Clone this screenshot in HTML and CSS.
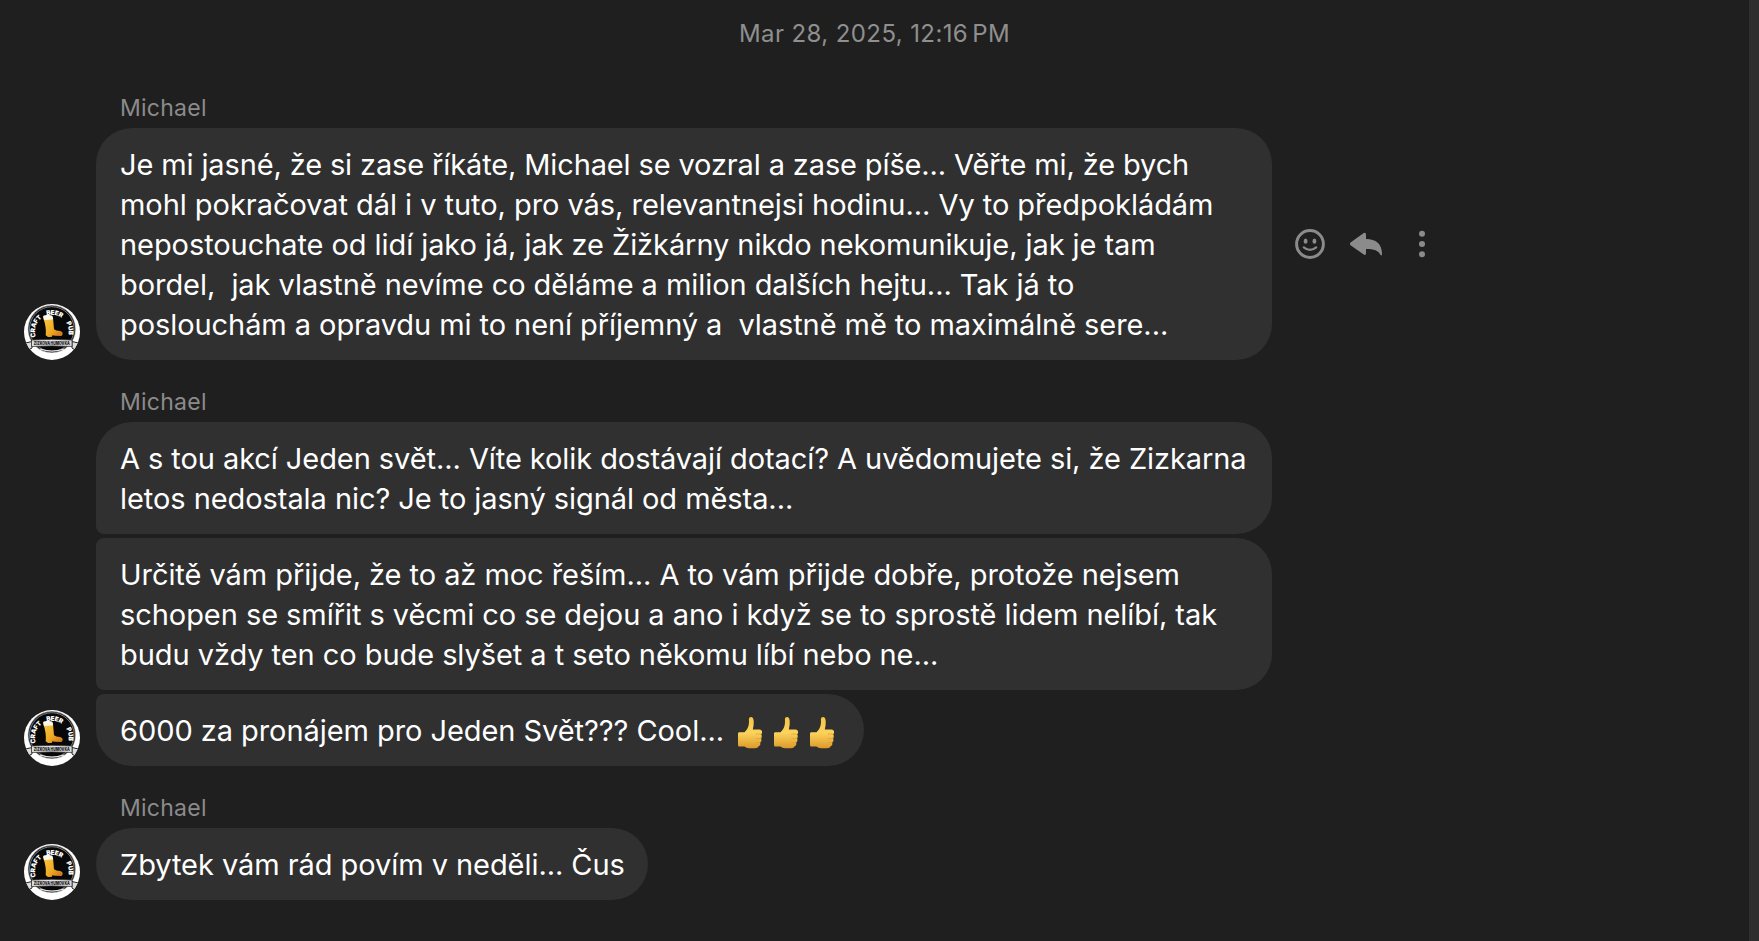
FILE: index.html
```html
<!DOCTYPE html>
<html lang="cs">
<head>
<meta charset="utf-8">
<title>Chat</title>
<link rel="stylesheet" href="styles.css">
</head>
<body>
<svg class="defs" aria-hidden="true">
  <defs>
    <linearGradient id="beer" x1="0" y1="0" x2="1" y2="1"><stop offset="0" stop-color="#f7c843"/><stop offset=".55" stop-color="#efaa24"/><stop offset="1" stop-color="#c96a1c"/></linearGradient>
    <linearGradient id="skin" x1="0" y1="0" x2="0" y2="1"><stop offset="0" stop-color="#f6c544"/><stop offset=".5" stop-color="#fbd35c"/><stop offset="1" stop-color="#dd9a2a"/></linearGradient>
    <clipPath id="round"><circle cx="28" cy="28" r="28"/></clipPath>
    <path id="arc" d="M12 33.2A16.8 16.8 0 1 1 43.6 33.2"/>
    <symbol id="avatar" viewBox="0 0 56 56">
      <g clip-path="url(#round)">
        <rect width="56" height="56" fill="#fff"/>
        <circle cx="27.8" cy="25" r="24" fill="#999"/>
        <circle cx="27.8" cy="25" r="23.3" fill="#080808"/>
        <circle cx="27.8" cy="25" r="22.3" fill="none" stroke="#ccc" stroke-width=".6"/>
        <text class="badge-text" text-anchor="middle"><textPath href="#arc" startOffset="17%">CRAFT</textPath></text>
        <text class="badge-text" text-anchor="middle"><textPath href="#arc" startOffset="54%">BEER</textPath></text>
        <text class="badge-text" text-anchor="middle"><textPath href="#arc" startOffset="86%">PUB</textPath></text>
        <path d="M19.5 14.5L29 13.7L30 25.2Q32 27 36 27Q39 27.7 38.7 30.2L37.6 32L31 31.7L28.6 31.3L27.6 33H24L21.7 31.2Q22.6 24 19.5 14.5Z" fill="url(#beer)"/>
        <path d="M19 13Q19 11 21.5 11.3Q24 9.8 26 11.2Q29 10.7 29 14.2L28.6 15.4L20 16Z" fill="#fff8e8"/>
        <path d="M1.5 39L8 37.5V44L4 46ZM54.5 39L48 37.5V44L51 46Z" fill="#ddd" stroke="#222"/>
        <path d="M16 45Q28 49 40 45" fill="none" stroke="#eee" stroke-width="1.2"/>
        <path d="M7.5 36Q28 34.5 48 36V42.5Q28 41.3 7.5 42.5Z" fill="#ddd" stroke="#222" stroke-width=".7"/>
        <text class="ribbon-text" x="27.8" y="40.6" text-anchor="middle" textLength="36" lengthAdjust="spacingAndGlyphs">ŽIŽKOVÁ HUMOVKA</text>
      </g>
    </symbol>
    <symbol id="thumb" viewBox="0 0 26 34">
      <path d="M1 17.5Q1 16.2 2.4 16.2H7.5Q12 12 12 6L11.9 3Q12 1 14 1Q16.4 1.2 16.7 5Q17 9.5 15.8 13.6H22.4Q25.3 14 25.1 16.4Q25 17.6 24.2 18.3Q25.8 20.5 24.2 22.7Q25.2 25 23.3 26.5Q24 29 21.7 30.3Q21 32.3 18 32.3H12Q9.2 32 7.5 30.5H2.2Q1 30.5 1 29Z" fill="url(#skin)"/>
      <path d="M18.5 18H24M18.5 22.5H24M18.5 26.5H23" fill="none" stroke="#dfa134" stroke-width=".7"/>
    </symbol>
  </defs>
</svg>

<main class="thread">
  <time class="timestamp">Mar 28, 2025, 12:16<span class="thin"></span>PM</time>

  <section class="group">
    <h2 class="sender">Michael</h2>
    <div class="row">
      <svg class="avatar" role="img" aria-label="Michael"><use href="#avatar"/></svg>
      <p class="bubble wide">
        <span class="line l1">Je mi jasné, že si zase říkáte, Michael se vozral a zase píše... Věřte mi, že bych</span>
        <span class="line l2">mohl pokračovat dál i v tuto, pro vás, relevantnejsi hodinu... Vy to předpokládám</span>
        <span class="line l3">nepostouchate od lidí jako já, jak ze Žižkárny nikdo nekomunikuje, jak je tam</span>
        <span class="line l4">bordel,&nbsp; jak vlastně nevíme co děláme a milion dalších hejtu... Tak já to</span>
        <span class="line l5">poslouchám a opravdu mi to není příjemný a&nbsp; vlastně mě to maximálně sere...</span>
      </p>
      <div class="actions">
        <svg viewBox="0 0 32 32"><circle cx="16" cy="16" r="13.4" fill="none" stroke="#8b8b8b" stroke-width="3"/><ellipse cx="11.6" cy="13.2" rx="1.9" ry="2.6"/><ellipse cx="20.4" cy="13.2" rx="1.9" ry="2.6"/><path d="M9.8 19.4Q16 24.4 22.2 19.4" fill="none" stroke="#8b8b8b" stroke-width="2.2" stroke-linecap="round"/></svg>
        <svg viewBox="0 0 32 32"><path d="M.5 14.4L13.8 5Q16 4 16 6.8V11C26 11 32 16 32 26Q32 28 30.8 27.3C28.5 22.5 24 21 16 21V25Q16 27.8 13.8 26.5L.5 17.2Q-.7 15.8 .5 14.4Z"/></svg>
        <svg viewBox="0 0 32 32"><circle cx="16" cy="5.8" r="3"/><circle cx="16" cy="16" r="3"/><circle cx="16" cy="26.2" r="3"/></svg>
      </div>
    </div>
  </section>

  <section class="group">
    <h2 class="sender">Michael</h2>
    <div class="row">
      <svg class="avatar" role="img" aria-label="Michael"><use href="#avatar"/></svg>
      <div class="stack">
        <p class="bubble wide first">
          <span class="line l6">A s tou akcí Jeden svět... Víte kolik dostávají dotací? A uvědomujete si, že Zizkarna</span>
          <span class="line l7">letos nedostala nic? Je to jasný signál od města...</span>
        </p>
        <p class="bubble wide middle">
          <span class="line l8">Určitě vám přijde, že to až moc řeším... A to vám přijde dobře, protože nejsem</span>
          <span class="line l9">schopen se smířit s věcmi co se dejou a ano i když se to sprostě lidem nelíbí, tak</span>
          <span class="line l10">budu vždy ten co bude slyšet a t seto někomu líbí nebo ne...</span>
        </p>
        <p class="bubble last emoji-line">
          <span class="line l11">6000 za pronájem pro Jeden Svět??? Cool...</span>
          <span class="thumbs" role="img" aria-label="👍👍👍"><svg><use href="#thumb"/></svg><svg><use href="#thumb"/></svg><svg><use href="#thumb"/></svg></span>
        </p>
      </div>
    </div>
  </section>

  <section class="group">
    <h2 class="sender">Michael</h2>
    <div class="row">
      <svg class="avatar" role="img" aria-label="Michael"><use href="#avatar"/></svg>
      <p class="bubble short"><span class="line l12">Zbytek vám rád povím v neděli... Čus</span></p>
    </div>
  </section>
</main>
</body>
</html>
```
FILE: styles.css
```css
* { box-sizing: border-box; }
body {
  margin: 0;
  height: 941px;
  overflow: hidden;
  background: #1f1f1f;
  font-family: Inter, "Liberation Sans", sans-serif;
}
.defs { position: absolute; width: 0; height: 0; }
.thread {
  height: 941px;
  border-right: 10px solid #2e2e2e;
  display: flex;
  flex-direction: column;
}
.timestamp {
  height: 88px;
  padding-top: 18px;
  text-align: center;
  font-size: 24px;
  line-height: 32px;
  font-weight: 400;
  letter-spacing: .4px;
  color: #8f8f8f;
}
.thin { display: inline-block; width: 4px; }
.group { margin-bottom: 22px; }
.sender {
  margin: 0;
  height: 40px;
  padding-left: 120px;
  font-size: 23px;
  line-height: 40px;
  font-weight: 400;
  letter-spacing: .25px;
  color: #8b8b8b;
}
.row { display: flex; align-items: flex-end; padding-left: 24px; }
.avatar { width: 56px; height: 56px; margin-right: 16px; flex: none; }
.badge-text { font: 900 6.4px Inter, sans-serif; letter-spacing: -.25px; fill: #fff; }
.ribbon-text { font: 900 4.5px Inter, sans-serif; fill: #222; }
.stack { display: flex; flex-direction: column; align-items: flex-start; gap: 4px; }
.bubble {
  margin: 0;
  padding: 17px 24px 15px;
  border-radius: 36px;
  background: #303030;
  color: #fff;
  font-size: 29px;
  line-height: 40px;
}
.wide { width: 1176px; }
.short { width: 552px; }
.first { border-bottom-left-radius: 8px; }
.middle { border-top-left-radius: 8px; border-bottom-left-radius: 8px; }
.last { border-top-left-radius: 8px; width: 768px; }
.line { display: block; white-space: nowrap; letter-spacing: -.06px; }
.l1 { letter-spacing: -.13px; }
.l2 { letter-spacing: -.05px; }
.l3, .l5, .l6 { letter-spacing: -.073px; }
.emoji-line { display: flex; align-items: center; }
.thumbs { display: flex; gap: 10px; margin-left: 13px; padding-top: 4px; }
.thumbs svg { width: 26px; height: 34px; }
.actions { align-self: center; display: flex; gap: 24px; margin-left: 22px; }
.actions svg { width: 32px; height: 32px; fill: #8b8b8b; }
```
